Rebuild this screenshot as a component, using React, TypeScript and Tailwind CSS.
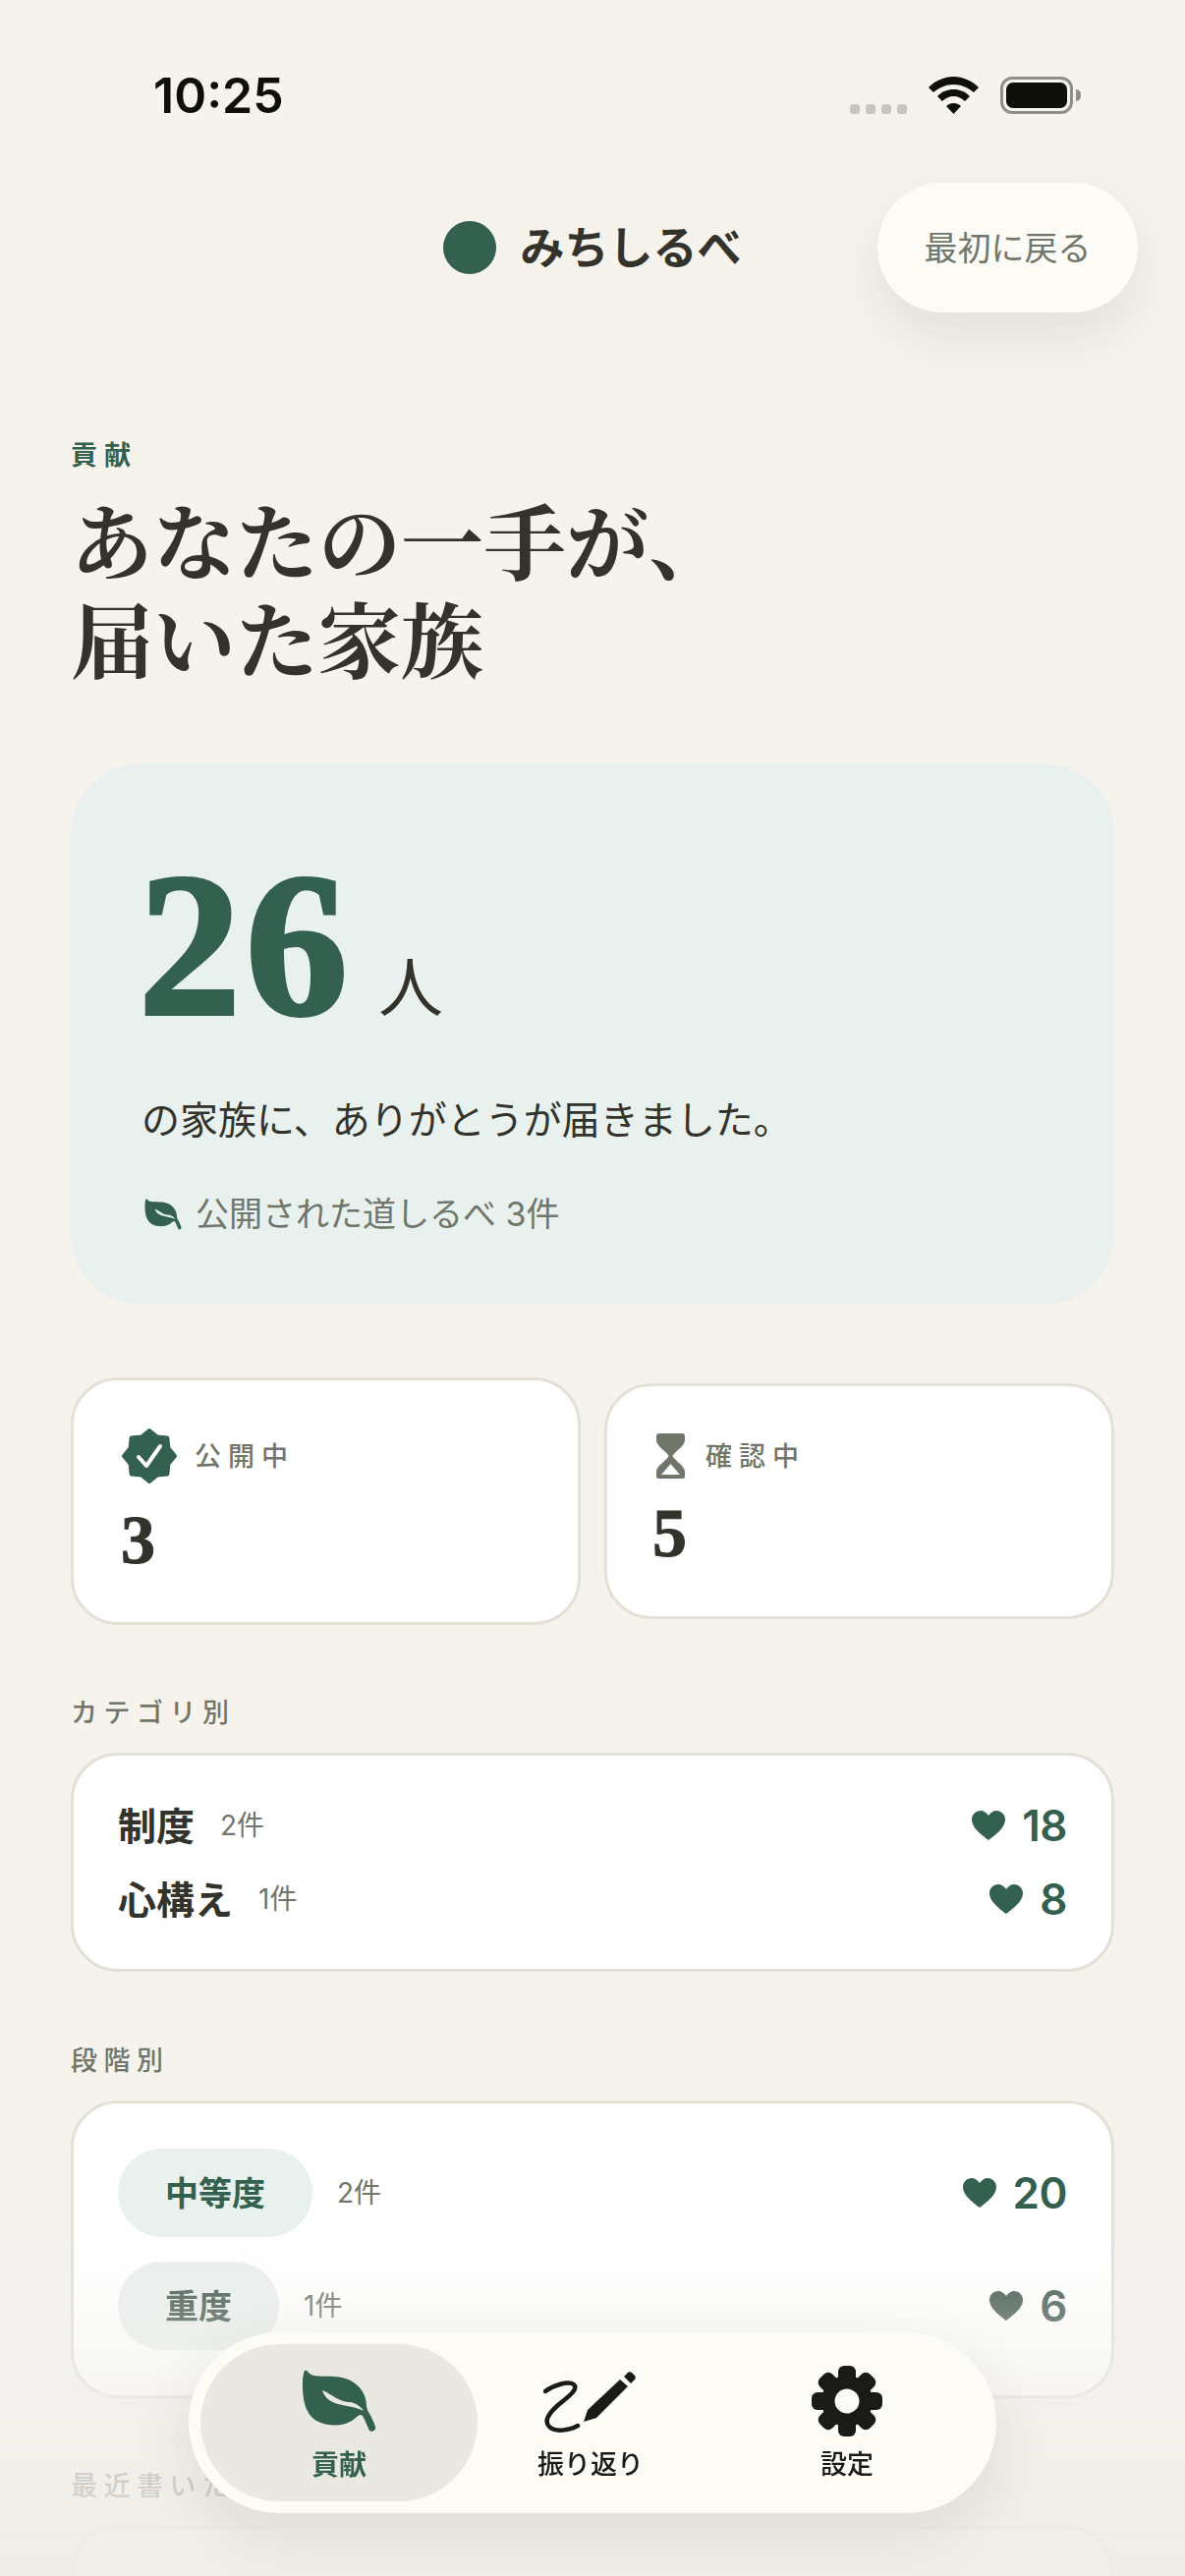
const sans = "font-['Inter','Noto_Sans_CJK_JP',sans-serif]"

function Leaf({ className }: { className: string }) {
  return (
    <svg viewBox="0 0 74 64" className={className} fill="currentColor">
      <path
        fillRule="evenodd"
        d="M2 1C2 1 4 0 6 3C11 9 26 5 40 8C54 11 65 22 65 37C65 39 66 41 67 43C70 48 72 52 74 58C75 62 70 64 68 62C66 58 64 52 61 47C58 44 56 48 50 52C40 58 26 58 14 52C2 44 0 30 0 14C0 8 1 3 2 1ZM20 21C22 28 28 33 36 35C44 37 54 38 62 42C58 36 52 33 46 33C36 32 30 25 20 21Z"
      />
    </svg>
  )
}

function Heart({ className }: { className: string }) {
  return (
    <svg viewBox="0 0 34 30" className={className} fill="currentColor">
      <path d="M17 30C15 28 0 19 0 9C0 4 4 0 9 0C12 0 15 2 17 5C19 2 22 0 25 0C30 0 34 4 34 9C34 19 19 28 17 30Z" />
    </svg>
  )
}

function Wifi() {
  return (
    <svg viewBox="0 0 51 38" className="h-[38px] w-[51px]" fill="#0f0f0a">
      <path d="M25.5 0C35 0 44 4 51 11L46 16C40 11 33 8 25.5 8C18 8 11 11 5 16L0 11C7 4 16 0 25.5 0Z" />
      <path d="M25.5 13C32 13 37 15 42 20L37 25C34 22 30 20 25.5 20C21 20 17 22 14 25L9 20C14 15 19 13 25.5 13Z" />
      <path d="M25.5 27C28 27 31 28 33 30L25.5 38L18 30C20 28 23 27 25.5 27Z" />
    </svg>
  )
}

function Hourglass() {
  return (
    <svg viewBox="0 0 29 46" className="h-[46px] w-[29px]" fill="#71766a">
      <path
        fillRule="evenodd"
        d="M3 0H26C28 0 29 1 29 3V7C29 13 19 18 16.5 23C19 28 29 33 29 39V44C29 45 28 46 27 46H2C1 46 0 45 0 44V39C0 33 10 28 12.5 23C10 18 0 13 0 7V3C0 1 1 0 3 0ZM14.5 31L5 42H24Z"
      />
    </svg>
  )
}

function Badge() {
  return (
    <svg viewBox="0 0 58 58" className="h-[58px] w-[58px] shrink-0">
      <path
        fill="#33604f"
        stroke="#33604f"
        strokeWidth="4"
        strokeLinejoin="round"
        d="M29 3L37 9.6L47.4 10.6L48.4 21L55 29L48.4 37L47.4 47.4L37 48.4L29 55L21 48.4L10.6 47.4L9.6 37L3 29L9.6 21L10.6 10.6L21 9.6Z"
      />
      <path d="M18 30L26 39L40 19" fill="none" stroke="#ffffff" strokeWidth="4" strokeLinecap="round" strokeLinejoin="round" />
    </svg>
  )
}

function Pen() {
  return (
    <svg viewBox="0 0 96 66" className="h-[66px] w-[96px]" fill="#1a1a16">
      <path d="M2 20C10 14 25 9 31 13C36 18 26 25 15 34C6 42 0 50 6 56C12 62 26 60 35 55" fill="none" stroke="#1a1a16" strokeWidth="4.5" strokeLinecap="round" />
      <path d="M41 51L45 39L78 8L86 15L54 47Z" />
      <path d="M82 5L86 1C87 0 89 0 90 1L93 4C94 5 94 7 93 8L89 12Z" />
    </svg>
  )
}

function Gear() {
  return (
    <svg viewBox="0 0 72 74" className="h-[74px] w-[72px]" fill="#1a1a16">
      <circle cx="36" cy="37" r="26" />
      {[0, 45, 90, 135, 180, 225, 270, 315].map(a => (
        <rect key={a} x="27" y="1" width="18" height="24" rx="6" transform={`rotate(${a} 36 37)`} />
      ))}
      <circle cx="36" cy="37" r="12.5" fill="#fdfbf5" />
    </svg>
  )
}

function StatCard({ icon, label, value, numberClass, boxClass }: { icon: React.ReactNode; label: string; value: string; numberClass: string; boxClass: string }) {
  return (
    <div className={`rounded-[48px] border-[3px] border-[#e3e0d5] bg-white ${boxClass}`}>
      <div className="flex items-center">
        {icon}
        <span className="ml-[17px] text-[27px] leading-none font-medium tracking-[7px] text-[#71766a]">{label}</span>
      </div>
      <div className={`font-['Liberation_Serif',serif] leading-none font-bold text-[#33332c] [-webkit-text-stroke:1px_#33332c] ${numberClass}`}>{value}</div>
    </div>
  )
}

function SectionLabel({ children }: { children: React.ReactNode }) {
  return <div className="text-[27px] leading-none font-medium tracking-[6.5px] text-[#71766a]">{children}</div>
}

function Hearts({ value }: { value: string }) {
  return (
    <div className="flex items-center gap-[17px] text-[#33604f]">
      <Heart className="h-[30px] w-[34px]" />
      <span className="text-[44px] leading-none font-semibold tracking-[-0.5px]">{value}</span>
    </div>
  )
}

function CountRow({ name, count, hearts }: { name: string; count: string; hearts: string }) {
  return (
    <div className="flex items-center justify-between">
      <div className="flex items-center">
        <span className="text-[39px] leading-none font-semibold text-[#33332c]">{name}</span>
        <span className="ml-[26px] text-[28px] leading-none text-[#71766a]">{count}</span>
      </div>
      <Hearts value={hearts} />
    </div>
  )
}

function StageRow({ name, count, hearts }: { name: string; count: string; hearts: string }) {
  return (
    <div className="flex items-center justify-between">
      <div className="flex items-center">
        <span className="flex h-[90px] items-center rounded-full bg-[#e8f1ed] px-[48px] text-[34px] font-semibold text-[#33604f]">{name}</span>
        <span className="ml-[25px] text-[28px] leading-none text-[#71766a]">{count}</span>
      </div>
      <Hearts value={hearts} />
    </div>
  )
}

export default function App() {
  return (
    <div className={`relative h-[2622px] w-[1206px] overflow-hidden bg-[#f6f3ed] ${sans}`}>
      {/* Status bar */}
      <div className="flex h-[186px] items-start justify-between pt-[72px] pr-[106px] pl-[156px]">
        <span className="font-['Inter',sans-serif] text-[50px] leading-[50px] font-semibold text-[#0f0f0a]">10:25</span>
        <div className="flex items-end pt-[6px]">
          <div className="flex gap-[6px]">
            {[0, 1, 2, 3].map(i => (
              <span key={i} className="h-[10px] w-[10px] rounded-[3px] bg-[#c4c5bf]" />
            ))}
          </div>
          <div className="ml-[22px]"><Wifi /></div>
          <div className="ml-[22px] flex items-center">
            <div className="flex h-[38px] w-[74px] rounded-[12px] border-[3px] border-[#8e9085] p-[3px]">
              <div className="flex-1 rounded-[7px] bg-[#0f0f0a]" />
            </div>
            <div className="ml-[3px] h-[12px] w-[5px] rounded-r-full bg-[#8e9085]" />
          </div>
        </div>
      </div>

      {/* Header */}
      <div className="relative flex h-[132px] items-center justify-center">
        <span className="h-[54px] w-[54px] rounded-full bg-[#33604f]" />
        <span className="ml-[24px] text-[45px] leading-none font-bold text-[#33332c]">みちしるべ</span>
        <button className="absolute top-0 right-[48px] flex h-[132px] w-[265px] items-center justify-center rounded-full bg-[#fdfbf5] text-[34px] text-[#71766a] shadow-[0_24px_60px_rgba(60,60,40,0.1)]">
          最初に戻る
        </button>
      </div>

      {/* Title */}
      <div className="px-[72px] pt-[132px]">
        <div className="text-[27px] leading-none font-semibold tracking-[7px] text-[#33604f]">貢献</div>
        <h1 className="mt-[21px] font-['Noto_Serif_CJK_JP','Liberation_Serif','Noto_Sans_CJK_JP',serif] text-[84px] leading-[100px] font-bold text-[#33332c]">
          あなたの一手が、
          <br />
          届いた家族
        </h1>

        {/* Hero */}
        <div className="mt-[79px] h-[551px] rounded-[72px] bg-[#e8f1ed] px-[72px] pt-[95px]">
          <div className="flex items-end">
            <span className="-ml-[3px] font-['Liberation_Serif',serif] text-[208px] leading-[180px] font-bold tracking-[5px] text-[#33604f] [-webkit-text-stroke:4px_#33604f]">26</span>
            <span className="mb-[14px] ml-[26px] text-[66px] leading-[66px] text-[#33332c]">人</span>
          </div>
          <div className="mt-[68px] text-[39px] leading-none text-[#33332c]">の家族に、ありがとうが届きました。</div>
          <div className="mt-[60px] flex items-center">
            <Leaf className="ml-[3px] h-[32px] w-[38px] text-[#33604f]" />
            <span className="ml-[14px] text-[34px] leading-none text-[#71766a]">公開された道しるべ 3件</span>
          </div>
        </div>

        {/* Stat cards */}
        <div className="mt-[74px] grid h-[252px] grid-cols-2 items-center gap-[24px]">
          <StatCard
            icon={<Badge />}
            label="公開中"
            value="3"
            boxClass="h-[252px] pt-[48px] pl-[48px]"
            numberClass="mt-[22px] text-[70px]"
          />
          <StatCard
            icon={<span className="flex w-[37px] pl-[4px]"><Hourglass /></span>}
            label="確認中"
            value="5"
            boxClass="h-[240px] pt-[48px] pl-[46px]"
            numberClass="mt-[21px] text-[70px]"
          />
        </div>

        {/* Category */}
        <div className="mt-[76px]"><SectionLabel>カテゴリ別</SectionLabel></div>
        <div className="mt-[27px] flex h-[223px] flex-col justify-center gap-[31px] rounded-[48px] border-[3px] border-[#e3e0d5] bg-white px-[45px]">
          <CountRow name="制度" count="2件" hearts="18" />
          <CountRow name="心構え" count="1件" hearts="8" />
        </div>

        {/* Stage */}
        <div className="mt-[77px]"><SectionLabel>段階別</SectionLabel></div>
        <div className="mt-[27px] flex h-[303px] flex-col justify-center gap-[25px] rounded-[48px] border-[3px] border-[#e3e0d5] bg-white px-[45px]">
          <StageRow name="中等度" count="2件" hearts="20" />
          <StageRow name="重度" count="1件" hearts="6" />
        </div>

        {/* Recent */}
        <div className="mt-[76px]"><SectionLabel>最近書いた道しるべ</SectionLabel></div>
        <div className="mt-[27px] h-[300px] rounded-[48px] border-[3px] border-[#e3e0d5] bg-white" />
      </div>

      {/* Fade under the tab bar */}
      <div className="pointer-events-none absolute inset-x-0 bottom-0 h-[340px] bg-gradient-to-b from-[#f5f3ed00] via-[#f1efe9a0] to-[#eeece6e8] backdrop-saturate-50" />

      {/* Tab bar */}
      <nav className="absolute top-[2374px] left-[192px] flex h-[184px] w-[822px] items-center rounded-full bg-[#fdfbf5] p-[12px] shadow-[0_20px_60px_rgba(60,60,40,0.1)]">
        <div className="flex h-[160px] w-[282px] shrink-0 flex-col items-center rounded-full bg-[#e9e8e1] pt-[26px]">
          <Leaf className="h-[64px] w-[74px] text-[#33604f]" />
          <span className="mt-[19px] text-[28px] leading-none font-semibold text-[#33604f]">貢献</span>
        </div>
        <div className="flex h-[160px] w-[230px] shrink-0 flex-col items-center pt-[28px]">
          <Pen />
          <span className="mt-[15px] text-[27px] leading-none font-medium text-[#1a1a16]">振り返り</span>
        </div>
        <div className="flex h-[160px] w-[292px] shrink-0 flex-col items-center pt-[21px]">
          <Gear />
          <span className="mt-[14px] text-[27px] leading-none font-medium text-[#1a1a16]">設定</span>
        </div>
      </nav>
    </div>
  )
}
